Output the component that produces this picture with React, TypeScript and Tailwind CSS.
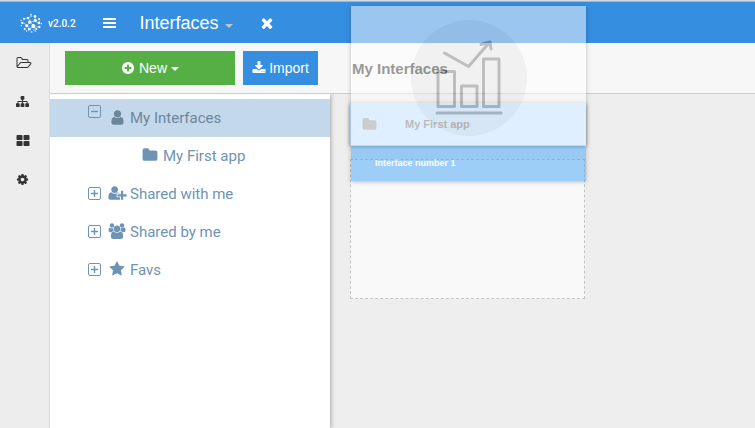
import type { ReactNode } from "react";

const paths = {
  plusCircle:
    "M1344 960v-128q0-26-19-45t-45-19h-256v-256q0-26-19-45t-45-19h-128q-26 0-45 19t-19 45v256h-256q-26 0-45 19t-19 45v128q0 26 19 45t45 19h256v256q0 26 19 45t45 19h128q26 0 45-19t19-45v-256h256q26 0 45-19t19-45zm320-64q0 209-103 385.5t-279.5 279.5-385.5 103-385.5-103-279.5-279.5-103-385.5 103-385.5 279.5-279.5 385.5-103 385.5 103 279.5 279.5 103 385.5z",
  download:
    "M1344 1344q0-26-19-45t-45-19-45 19-19 45 19 45 45 19 45-19 19-45zm256 0q0-26-19-45t-45-19-45 19-19 45 19 45 45 19 45-19 19-45zm128-224v320q0 40-28 68t-68 28h-1472q-40 0-68-28t-28-68v-320q0-40 28-68t68-28h465l135 136q58 56 136 56t136-56l136-136h464q40 0 68 28t28 68zm-325-569q17 41-14 70l-448 448q-18 19-45 19t-45-19l-448-448q-31-29-14-70 17-39 59-39h256v-448q0-26 19-45t45-19h256q26 0 45 19t19 45v448h256q42 0 59 39z",
  user: "M1536 1399q0 109-62.5 187t-150.5 78h-854q-88 0-150.5-78t-62.5-187q0-85 8.5-160.5t31.5-152 58.5-131 94-89 134.5-34.5q131 128 313 128t313-128q76 0 134.5 34.5t94 89 58.5 131 31.5 152 8.5 160.5zm-256-887q0 159-112.5 271.5t-271.5 112.5-271.5-112.5-112.5-271.5 112.5-271.5 271.5-112.5 271.5 112.5 112.5 271.5z",
  users:
    "M657 896q-162 5-265 128h-134q-82 0-138-40.5t-56-118.5q0-353 124-353 6 0 43.5 21t97.5 42.5 119 21.5q67 0 133-23-5 37-5 66 0 159 90 294zm1071 637q0 120-73 189.5t-194 69.5h-874q-121 0-194-69.5t-73-189.5q0-53 3.5-103.5t14-109 26.5-108.5 43-97.5 62-81 85.5-53.5 111.5-20q10 0 43 21.5t73 48 107 48 135 21.5 135-21.5 107-48 73-48 43-21.5q61 0 111.5 20t85.5 53.5 62 81 43 97.5 26.5 108.5 14 109 3.5 103.5zm-1024-1277q0 106-75 181t-181 75-181-75-75-181 75-181 181-75 181 75 75 181zm704 384q0 159-112.5 271.5t-271.5 112.5-271.5-112.5-112.5-271.5 112.5-271.5 271.5-112.5 271.5 112.5 112.5 271.5zm576 225q0 78-56 118.5t-138 40.5h-134q-103-123-265-128 90-135 90-294 0-29-5-66 66 23 133 23 59 0 119-21.5t97.5-42.5 43.5-21q124 0 124 353zm-128-609q0 106-75 181t-181 75-181-75-75-181 75-181 181-75 181 75 75 181z",
  userPlus:
    "M704 896q-159 0-271.5-112.5t-112.5-271.5 112.5-271.5 271.5-112.5 271.5 112.5 112.5 271.5-112.5 271.5-271.5 112.5zm960 128h352q13 0 22.5 9.5t9.5 22.5v192q0 13-9.5 22.5t-22.5 9.5h-352v352q0 13-9.5 22.5t-22.5 9.5h-192q-13 0-22.5-9.5t-9.5-22.5v-352h-352q-13 0-22.5-9.5t-9.5-22.5v-192q0-13 9.5-22.5t22.5-9.5h352v-352q0-13 9.5-22.5t22.5-9.5h192q13 0 22.5 9.5t9.5 22.5v352zm-736 224q0 52 38 90t90 38h256v238q-68 50-171 50h-874q-121 0-194-69t-73-190q0-53 3.5-103.5t14-109 26.5-108.5 43-97.5 62-81 85.5-53.5 111.5-20q19 0 39 17 79 61 154.5 91.5t164.5 30.5 164.5-30.5 154.5-91.5q20-17 39-17 132 0 217 96h-223q-52 0-90 38t-38 90v192z",
  star: "M1728 647q0 22-26 48l-363 354 86 500q1 7 1 20 0 21-10.5 35.5t-30.5 14.5q-19 0-40-12l-449-236-449 236q-22 12-40 12-21 0-31.5-14.5t-10.5-35.5q0-6 2-20l86-500-364-354q-25-27-25-48 0-37 56-46l502-73 225-455q19-41 49-41t49 41l225 455 502 73q56 9 56 46z",
  folder:
    "M1728 608v704q0 92-66 158t-158 66h-1216q-92 0-158-66t-66-158v-960q0-92 66-158t158-66h320q92 0 158 66t66 158v32h672q92 0 158 66t66 158z",
  folderOpen:
    "M1845 931q0-35-53-35h-1088q-40 0-85.5 21.5t-71.5 52.5l-294 363q-18 24-18 40 0 35 53 35h1088q40 0 86-22t71-53l294-363q18-22 18-39zm-1141-163h768v-160q0-40-28-68t-68-28h-576q-40 0-68-28t-28-68v-64q0-40-28-68t-68-28h-320q-40 0-68 28t-28 68v853l256-315q44-53 116-87.5t140-34.5zm1269 163q0 62-46 120l-295 363q-43 53-116 87.5t-140 34.5h-1088q-92 0-158-66t-66-158v-960q0-92 66-158t158-66h320q92 0 158 66t66 158v32h544q92 0 158 66t66 158v160h192q54 0 99 24.5t67 70.5q15 32 15 68z",
  sitemap:
    "M1792 1248v320q0 40-28 68t-68 28h-320q-40 0-68-28t-28-68v-320q0-40 28-68t68-28h96v-192h-512v192h96q40 0 68 28t28 68v320q0 40-28 68t-68 28h-320q-40 0-68-28t-28-68v-320q0-40 28-68t68-28h96v-192h-512v192h96q40 0 68 28t28 68v320q0 40-28 68t-68 28h-320q-40 0-68-28t-28-68v-320q0-40 28-68t68-28h96v-192q0-52 38-90t90-38h512v-192h-96q-40 0-68-28t-28-68v-320q0-40 28-68t68-28h320q40 0 68 28t28 68v320q0 40-28 68t-68 28h-96v192h512q52 0 90 38t38 90v192h96q40 0 68 28t28 68z",
  grid: "M832 1024v384q0 52-38 90t-90 38h-512q-52 0-90-38t-38-90v-384q0-52 38-90t90-38h512q52 0 90 38t38 90zm0-768v384q0 52-38 90t-90 38h-512q-52 0-90-38t-38-90v-384q0-52 38-90t90-38h512q52 0 90 38t38 90zm896 768v384q0 52-38 90t-90 38h-512q-52 0-90-38t-38-90v-384q0-52 38-90t90-38h512q52 0 90 38t38 90zm0-768v384q0 52-38 90t-90 38h-512q-52 0-90-38t-38-90v-384q0-52 38-90t90-38h512q52 0 90 38t38 90z",
  cog: "M1152 896q0-106-75-181t-181-75-181 75-75 181 75 181 181 75 181-75 75-181zm512-109v222q0 12-8 23t-20 13l-185 28q-19 54-39 91 35 50 107 138 10 12 10 25t-9 23q-27 37-99 108t-94 71q-12 0-26-9l-138-108q-44 23-91 38-16 136-29 186-7 28-36 28h-222q-14 0-24.5-8.5t-11.5-21.5l-28-184q-49-16-90-37l-141 107q-10 9-25 9-14 0-25-11-126-114-165-168-7-10-7-23 0-12 8-23 15-21 51-66.5t54-70.5q-27-50-41-99l-183-27q-13-2-21-12.5t-8-23.5v-222q0-12 8-23t19-13l186-28q14-46 39-92-40-57-107-138-10-12-10-24 0-10 9-23 26-36 98.5-107.5t94.5-71.5q13 0 26 10l138 107q44-23 91-38 16-136 29-186 7-28 36-28h222q14 0 24.5 8.5t11.5 21.5l28 184q49 16 90 37l142-107q9-9 24-9 13 0 25 10 129 119 165 170 7 8 7 22 0 12-8 23-15 21-51 66.5t-54 70.5q26 50 41 98l183 28q13 2 21 12.5t8 23.5z",
  times:
    "M1490 1322q0 40-28 68l-136 136q-28 28-68 28t-68-28l-294-294-294 294q-28 28-68 28t-68-28l-136-136q-28-28-28-68t28-68l294-294-294-294q-28-28-28-68t28-68l136-136q28-28 68-28t68 28l294 294 294-294q28-28 68-28t68 28l136 136q28 28 28 68t-28 68l-294 294 294 294q28 28 28 68z",
};

type IconName = keyof typeof paths;

function Icon({ name, className = "" }: { name: IconName; className?: string }) {
  const wide = name === "users" || name === "userPlus" || name === "folderOpen";
  return (
    <svg
      aria-hidden="true"
      viewBox={wide ? "0 0 2048 1792" : "0 0 1792 1792"}
      fill="currentColor"
      className={`shrink-0 ${className}`}
    >
      <path d={paths[name]} />
    </svg>
  );
}

function Logo() {
  return (
    <svg aria-hidden="true" viewBox="0 0 66 60" className="h-5 w-[22px] shrink-0" fill="#fff">
      <path
        d="M10 30 22 36 31 27 46 24 55 30M22 36 28 46 44 42 58 42M31 27 24 14 36 10M46 24 44 10M31 27 44 42M12 18 24 14M44 42 40 54M55 30 60 22"
        fill="none"
        stroke="#fff"
        strokeWidth="1.5"
      />
      <circle cx="29" cy="27" r="5" />
      <circle cx="40" cy="39" r="6" />
      <circle cx="46" cy="22" r="5" />
      <circle cx="20" cy="38" r="4.5" />
      <circle cx="24" cy="15" r="3.5" />
      <circle cx="45" cy="10" r="4" />
      <circle cx="33" cy="5" r="2.5" />
      <circle cx="12" cy="17" r="3" />
      <circle cx="7" cy="30" r="3.5" />
      <circle cx="4" cy="38" r="2" />
      <circle cx="3" cy="22" r="2" />
      <circle cx="57" cy="18" r="3" />
      <circle cx="57" cy="30" r="4" />
      <circle cx="64" cy="32" r="2" />
      <circle cx="58" cy="42" r="3.5" />
      <circle cx="49" cy="48" r="3" />
      <circle cx="28" cy="49" r="4" />
      <circle cx="14" cy="48" r="3" />
      <circle cx="35" cy="57" r="2.5" />
      <circle cx="20" cy="54" r="2" />
      <circle cx="46" cy="54" r="2" />
    </svg>
  );
}

function Caret({ className }: { className: string }) {
  return (
    <svg aria-hidden="true" viewBox="0 0 8 4" className={`h-1 w-2 shrink-0 ${className}`} fill="currentColor">
      <path d="M0 0h8L4 4z" />
    </svg>
  );
}

function Toggle({ open, label }: { open?: boolean; label: string }) {
  return (
    <button type="button" aria-label={label} aria-expanded={!!open} className={open ? "mb-[14px]" : "mb-0.5"}>
      <svg viewBox="0 0 13 13" className="size-[13px]" fill="none" stroke="#6f93b5">
        <rect x="0.5" y="0.5" width="12" height="12" rx="1.5" />
        <path d={open ? "M3 6.5h7" : "M3 6.5h7M6.5 3v7"} strokeWidth="1.4" />
      </svg>
    </button>
  );
}

function Branch({
  icon,
  iconClass,
  label,
  open,
  children,
}: {
  icon: IconName;
  iconClass: string;
  label: string;
  open?: boolean;
  children?: ReactNode;
}) {
  return (
    <li>
      <div className={`flex h-[38px] items-center pl-[38px] ${open ? "bg-[#c4d8ec] text-[#6b8799]" : ""}`}>
        <Toggle open={open} label={`Toggle ${label}`} />
        <a href="#" className="flex items-center pl-1.5">
          <span className="mb-0.5 flex w-5 justify-center">
            <Icon name={icon} className={iconClass} />
          </span>
          <span className="pl-[3px]">{label}</span>
        </a>
      </div>
      {children}
    </li>
  );
}

const menu: { icon: IconName; label: string; size: string }[] = [
  { icon: "folderOpen", label: "Projects", size: "h-[14px] w-4" },
  { icon: "sitemap", label: "Structure", size: "size-[13px]" },
  { icon: "grid", label: "Dashboards", size: "size-[14px]" },
  { icon: "cog", label: "Settings", size: "size-[13px]" },
];

export default function App() {
  return (
    <div className="flex min-h-screen flex-col border-t border-[#d5d9dd] bg-[#eee] font-['Liberation_Sans',Arial,sans-serif]">
      <header className="flex h-[42px] shrink-0 items-center border-t border-[#9db8d2] bg-[#368ee0] pl-5 text-white">
        <Logo />
        <span className="pt-0.5 pl-1.5 font-[Roboto,sans-serif] text-[10px] leading-3 font-medium">v2.0.2</span>
        <button type="button" aria-label="Menu" className="ml-[27px] flex w-[13px] flex-col gap-0.5">
          <span className="h-0.5 bg-white" />
          <span className="h-0.5 bg-white" />
          <span className="h-0.5 bg-white" />
        </button>
        <button type="button" className="ml-6 flex items-center gap-1.5 text-lg leading-6">
          Interfaces
          <Caret className="mt-1.5 text-[#bcc5cd]" />
        </button>
        <button type="button" aria-label="Close" className="ml-[26px]">
          <Icon name="times" className="size-4" />
        </button>
      </header>

      <div className="flex flex-1">
        <nav className="w-[50px] shrink-0 border-r border-[#ddd] bg-[#ededed] text-[#333]">
          <ul>
            {menu.map((item) => (
              <li key={item.label}>
                <a href="#" aria-label={item.label} className="flex h-[39px] items-center pl-4">
                  <Icon name={item.icon} className={item.size} />
                </a>
              </li>
            ))}
          </ul>
        </nav>

        <div className="flex min-w-0 flex-1 flex-col">
          <div className="flex h-[51px] shrink-0 items-center border-b border-[#ccc] bg-[#f7f7f7] pl-[15px]">
            <div className="flex w-[265px] shrink-0 gap-2 pr-3 text-sm leading-5 text-white">
              <button type="button" className="flex h-[34px] flex-1 items-center justify-center gap-1 bg-[#56af45]">
                <Icon name="plusCircle" className="size-[14px]" />
                New
                <Caret className="mt-0.5" />
              </button>
              <button type="button" className="flex h-[34px] w-[75px] items-center justify-center gap-[3px] bg-[#368ee0]">
                <Icon name="download" className="size-[14px]" />
                Import
              </button>
            </div>
            <h1 className="pt-0.5 pl-[22px] text-[15px] leading-5 font-bold text-[#333]">My Interfaces</h1>
          </div>

          <div className="flex flex-1">
            <aside className="w-[280px] shrink-0 bg-white pt-[5px] shadow-[1px_0_4px_rgba(0,0,0,0.3)] [clip-path:inset(0_-8px_0_0)]">
              <ul className="font-[Roboto,sans-serif] text-[15px] leading-5 text-[#6f93b5]">
                <Branch icon="user" iconClass="size-[17px]" label="My Interfaces" open>
                  <ul>
                    <li className="flex h-[38px] items-center pl-[92px]">
                      <a href="#" className="flex items-center gap-[5px]">
                        <Icon name="folder" className="mb-0.5 size-4" />
                        My First app
                      </a>
                    </li>
                  </ul>
                </Branch>
                <Branch icon="userPlus" iconClass="h-4 w-[19px]" label="Shared with me" />
                <Branch icon="users" iconClass="h-4 w-[18px]" label="Shared by me" />
                <Branch icon="star" iconClass="size-4" label="Favs" />
              </ul>
            </aside>

            <main className="min-w-0 flex-1 pt-[9px] pl-5">
              <div className="relative w-[236px]">
                <section className="flex h-[42px] items-center bg-[#c1e0ff] pl-3 shadow-[0_1px_4px_rgba(0,0,0,0.5)]">
                  <Icon name="folder" className="size-[15px] text-[#999]" />
                  <h2 className="pl-7 text-[11px] leading-4 font-bold text-[#777]">My First app</h2>
                </section>
                <div className="mt-[14px] mr-px h-[140px] border border-dashed border-[#c4c4c4] bg-[#f9f9f9]" />

                {/* card being dragged over the drop zone */}
                <article className="absolute -top-[97px] right-0 left-px bg-white opacity-50 shadow-[0_1px_4px_rgba(0,0,0,0.5)]">
                  <div className="flex h-[140px] items-center justify-center pt-1">
                    <svg
                      aria-hidden="true"
                      viewBox="0 0 116 116"
                      className="size-[116px]"
                      fill="none"
                      stroke="#868686"
                      strokeWidth="3"
                      strokeLinecap="round"
                      strokeLinejoin="round"
                    >
                      <circle cx="58" cy="58" r="58" fill="#ededed" stroke="none" />
                      <path d="M27 51.500h16.500v35H27zM50.500 66h15.500v20.500H50.500zM72.500 39h15.500v47.500H72.500zM26 93h64" />
                      <path d="M33.500 33 57.500 46.500 78 23M70 24.500l9-2.500 1 7" />
                    </svg>
                  </div>
                  <div className="h-[35px] bg-[#42a5f6] pt-[10px] pl-6 text-[9px] leading-[14px] font-bold text-white">
                    Interface number 1
                  </div>
                </article>
              </div>
            </main>
          </div>
        </div>
      </div>
    </div>
  );
}
